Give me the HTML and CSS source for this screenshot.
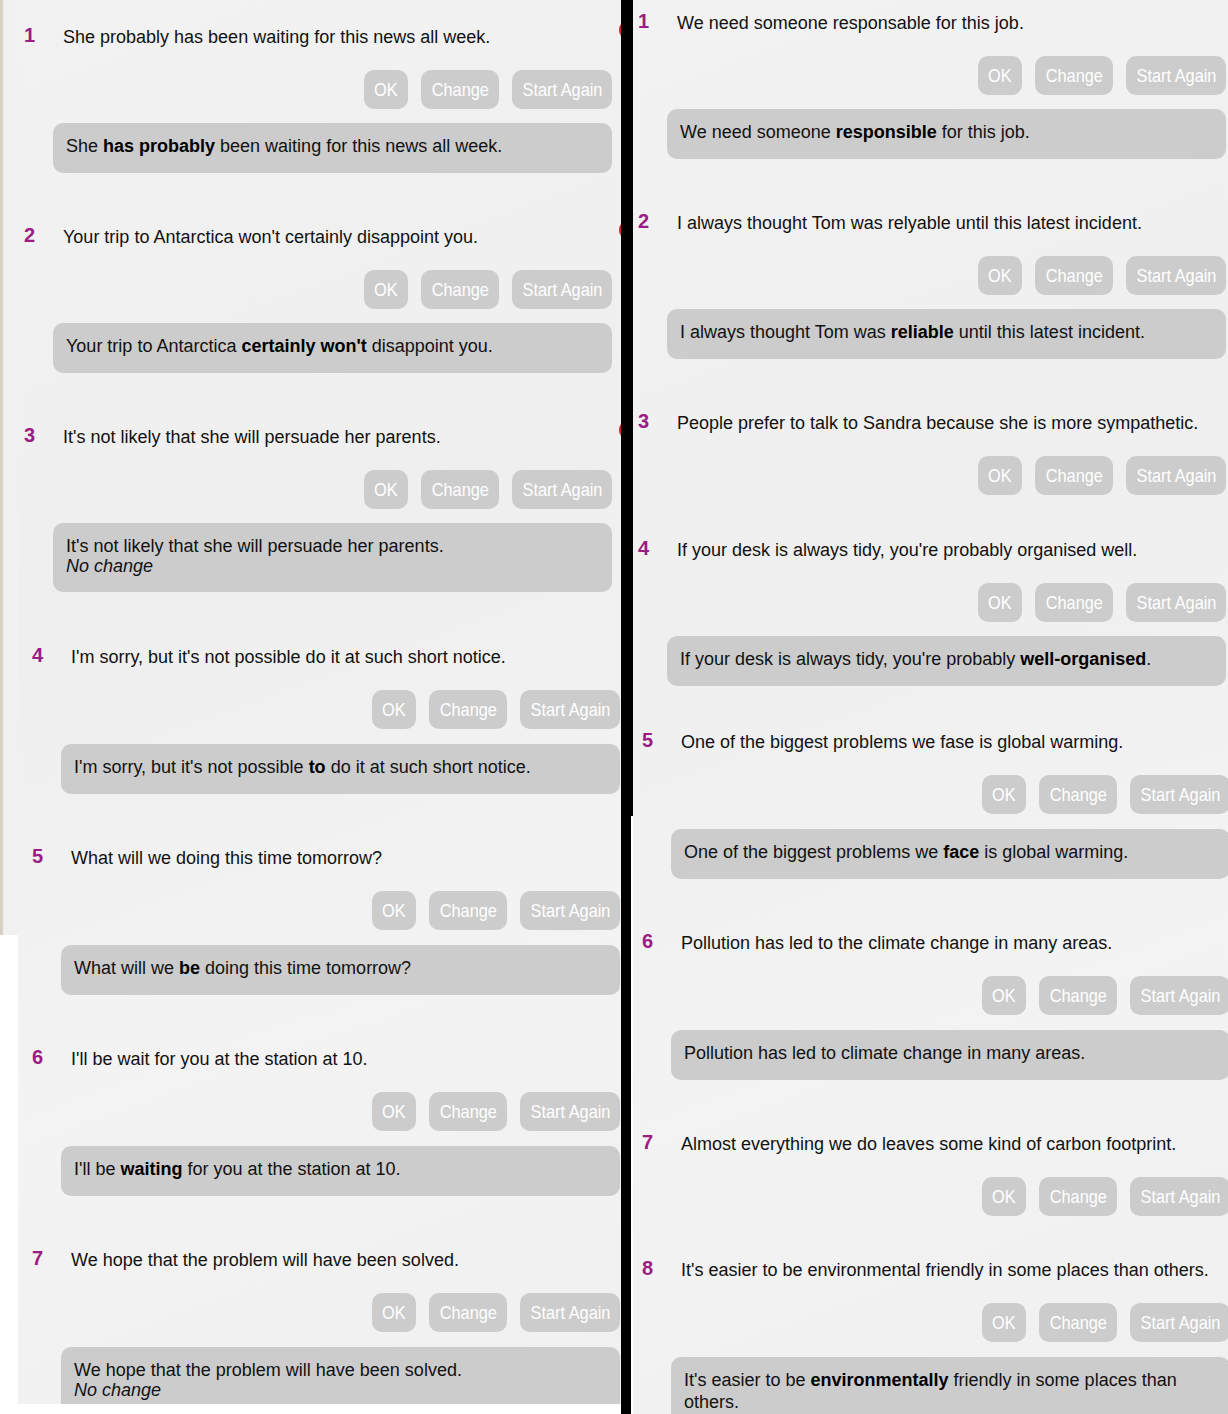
FILE: index.html
```html
<!DOCTYPE html>
<html lang="en">
<head>
<meta charset="utf-8">
<title>Sentence correction</title>
<link rel="stylesheet" href="styles.css">
</head>
<body>
<div class="page">
  <div class="col col--left">
    <div class="edge">
      <div class="edge-top"></div>
      <div class="edge-bottom"></div>
    </div>
    <div class="col-body">
      <div class="panel panel--a">
        <div class="item">
          <div class="q"><span class="num">1</span><span class="q-text">She probably has been waiting for this news all week.</span></div>
          <div class="btns"><button class="btn btn--ok"><span class="btn-label">OK</span></button><button class="btn btn--change"><span class="btn-label">Change</span></button><button class="btn btn--again"><span class="btn-label">Start Again</span></button></div>
          <div class="answer">She <b>has probably</b> been waiting for this news all week.</div>
        </div>
        <div class="item">
          <div class="q"><span class="num">2</span><span class="q-text">Your trip to Antarctica won't certainly disappoint you.</span></div>
          <div class="btns"><button class="btn btn--ok"><span class="btn-label">OK</span></button><button class="btn btn--change"><span class="btn-label">Change</span></button><button class="btn btn--again"><span class="btn-label">Start Again</span></button></div>
          <div class="answer">Your trip to Antarctica <b>certainly won't</b> disappoint you.</div>
        </div>
        <div class="item">
          <div class="q"><span class="num">3</span><span class="q-text">It's not likely that she will persuade her parents.</span></div>
          <div class="btns"><button class="btn btn--ok"><span class="btn-label">OK</span></button><button class="btn btn--change"><span class="btn-label">Change</span></button><button class="btn btn--again"><span class="btn-label">Start Again</span></button></div>
          <div class="answer">It's not likely that she will persuade her parents.<span class="note">No change</span></div>
        </div>
      </div>
      <div class="panel panel--b">
        <div class="item">
          <div class="q"><span class="num">4</span><span class="q-text">I'm sorry, but it's not possible do it at such short notice.</span></div>
          <div class="btns"><button class="btn btn--ok"><span class="btn-label">OK</span></button><button class="btn btn--change"><span class="btn-label">Change</span></button><button class="btn btn--again"><span class="btn-label">Start Again</span></button></div>
          <div class="answer">I'm sorry, but it's not possible <b>to</b> do it at such short notice.</div>
        </div>
        <div class="item">
          <div class="q"><span class="num">5</span><span class="q-text">What will we doing this time tomorrow?</span></div>
          <div class="btns"><button class="btn btn--ok"><span class="btn-label">OK</span></button><button class="btn btn--change"><span class="btn-label">Change</span></button><button class="btn btn--again"><span class="btn-label">Start Again</span></button></div>
          <div class="answer">What will we <b>be</b> doing this time tomorrow?</div>
        </div>
        <div class="item">
          <div class="q"><span class="num">6</span><span class="q-text">I'll be wait for you at the station at 10.</span></div>
          <div class="btns"><button class="btn btn--ok"><span class="btn-label">OK</span></button><button class="btn btn--change"><span class="btn-label">Change</span></button><button class="btn btn--again"><span class="btn-label">Start Again</span></button></div>
          <div class="answer">I'll be <b>waiting</b> for you at the station at 10.</div>
        </div>
        <div class="item">
          <div class="q"><span class="num">7</span><span class="q-text">We hope that the problem will have been solved.</span></div>
          <div class="btns"><button class="btn btn--ok"><span class="btn-label">OK</span></button><button class="btn btn--change"><span class="btn-label">Change</span></button><button class="btn btn--again"><span class="btn-label">Start Again</span></button></div>
          <div class="answer">We hope that the problem will have been solved.<span class="note">No change</span></div>
        </div>
      </div>
    </div>
  </div>

  <div class="divider">
    <div class="divider-top"></div>
    <div class="divider-bottom"></div>
  </div>

  <div class="col col--right">
    <div class="panel panel--c">
      <div class="item">
        <div class="q"><span class="num">1</span><span class="q-text">We need someone responsable for this job.</span></div>
        <div class="btns"><button class="btn btn--ok"><span class="btn-label">OK</span></button><button class="btn btn--change"><span class="btn-label">Change</span></button><button class="btn btn--again"><span class="btn-label">Start Again</span></button></div>
        <div class="answer">We need someone <b>responsible</b> for this job.</div>
      </div>
      <div class="item">
        <div class="q"><span class="num">2</span><span class="q-text">I always thought Tom was relyable until this latest incident.</span></div>
        <div class="btns"><button class="btn btn--ok"><span class="btn-label">OK</span></button><button class="btn btn--change"><span class="btn-label">Change</span></button><button class="btn btn--again"><span class="btn-label">Start Again</span></button></div>
        <div class="answer">I always thought Tom was <b>reliable</b> until this latest incident.</div>
      </div>
      <div class="item item--open">
        <div class="q"><span class="num">3</span><span class="q-text">People prefer to talk to Sandra because she is more sympathetic.</span></div>
        <div class="btns"><button class="btn btn--ok"><span class="btn-label">OK</span></button><button class="btn btn--change"><span class="btn-label">Change</span></button><button class="btn btn--again"><span class="btn-label">Start Again</span></button></div>
      </div>
      <div class="item">
        <div class="q"><span class="num">4</span><span class="q-text">If your desk is always tidy, you're probably organised well.</span></div>
        <div class="btns"><button class="btn btn--ok"><span class="btn-label">OK</span></button><button class="btn btn--change"><span class="btn-label">Change</span></button><button class="btn btn--again"><span class="btn-label">Start Again</span></button></div>
        <div class="answer">If your desk is always tidy, you're probably <b>well-organised</b>.</div>
      </div>
    </div>
    <div class="panel panel--d">
      <div class="item">
        <div class="q"><span class="num">5</span><span class="q-text">One of the biggest problems we fase is global warming.</span></div>
        <div class="btns"><button class="btn btn--ok"><span class="btn-label">OK</span></button><button class="btn btn--change"><span class="btn-label">Change</span></button><button class="btn btn--again"><span class="btn-label">Start Again</span></button></div>
        <div class="answer">One of the biggest problems we <b>face</b> is global warming.</div>
      </div>
      <div class="item">
        <div class="q"><span class="num">6</span><span class="q-text">Pollution has led to the climate change in many areas.</span></div>
        <div class="btns"><button class="btn btn--ok"><span class="btn-label">OK</span></button><button class="btn btn--change"><span class="btn-label">Change</span></button><button class="btn btn--again"><span class="btn-label">Start Again</span></button></div>
        <div class="answer">Pollution has led to climate change in many areas.</div>
      </div>
      <div class="item item--open">
        <div class="q"><span class="num">7</span><span class="q-text">Almost everything we do leaves some kind of carbon footprint.</span></div>
        <div class="btns"><button class="btn btn--ok"><span class="btn-label">OK</span></button><button class="btn btn--change"><span class="btn-label">Change</span></button><button class="btn btn--again"><span class="btn-label">Start Again</span></button></div>
      </div>
      <div class="item">
        <div class="q"><span class="num">8</span><span class="q-text">It's easier to be environmental friendly in some places than others.</span></div>
        <div class="btns"><button class="btn btn--ok"><span class="btn-label">OK</span></button><button class="btn btn--change"><span class="btn-label">Change</span></button><button class="btn btn--again"><span class="btn-label">Start Again</span></button></div>
        <div class="answer">It's easier to be <b>environmentally</b> friendly in some places than others.</div>
      </div>
    </div>
  </div>
</div>
</body>
</html>
```

FILE: styles.css
```css
* { box-sizing: border-box; }

html, body {
  margin: 0;
  padding: 0;
  background: #ffffff;
}

body {
  width: 1228px;
  height: 1414px;
  overflow: hidden;
  font-family: "Liberation Sans", Arial, sans-serif;
  font-size: 18px;
  color: #111111;
}

.page {
  display: flex;
  align-items: flex-start;
  width: 1228px;
  height: 1414px;
}

.col {
  overflow: hidden;
  background: linear-gradient(160deg, #f2f2f2 0%, #efefef 40%, #f3f3f3 70%, #f0f0f0 100%);
}

.col--left {
  width: 621px;
  height: 1404px;
  display: flex;
  flex: none;
}

.col--right {
  width: 595px;
  height: 1414px;
  flex: none;
}

.edge {
  width: 18px;
  flex: none;
  display: flex;
  flex-direction: column;
}

.edge-top {
  height: 935px;
  background: linear-gradient(to right, #d9d3c5 0, #d2ccbd 2px, #e6e2d9 3px, #f1f1f1 4px);
}

.edge-bottom {
  flex: 1;
  background: #ffffff;
}

.col-body {
  flex: 1;
  min-width: 0;
}

.divider {
  width: 12px;
  height: 1414px;
  flex: none;
  display: flex;
  flex-direction: column;
}

.divider-top {
  height: 816px;
  background: #000000;
}

.divider-bottom {
  flex: 1;
  background: linear-gradient(to right, #000 0, #000 10px, #ffffff 10px);
}

/* panels */
.panel--a { padding: 27px 0 0 5px; }
.panel--b { padding: 1px 0 0 13px; }
.panel--c { padding: 13px 0 0 4px; }
.panel--d { padding-left: 8px; }

/* item */
.item {
  position: relative;
  width: 589px;
  margin-bottom: 54px;
}

.panel--c .item:last-child { margin-bottom: 46px; }

.panel--c .item--open,
.panel--d .item--open { margin-bottom: 0; }

.panel--c .item--open .btns { margin-bottom: 45px; }
.panel--d .item--open .btns { margin-bottom: 44px; }

.panel--a .item::after {
  content: "";
  position: absolute;
  left: 596px;
  top: -7px;
  width: 20px;
  height: 20px;
  border-radius: 50%;
  background: #c4272f;
}

.q {
  display: flex;
  align-items: flex-start;
  height: 21px;
  line-height: 21px;
  white-space: nowrap;
}

.num {
  width: 40px;
  flex: none;
  padding-left: 1px;
  font-size: 20px;
  font-weight: bold;
  line-height: 17px;
  color: #9a1c84;
}

.q-text {
  color: #111111;
}

.btns {
  display: flex;
  justify-content: flex-end;
  gap: 13px;
  margin-top: 22px;
}

.btn {
  height: 39px;
  padding: 0;
  border: 0;
  border-radius: 10px;
  background: #cccccc;
  color: #ffffff;
  font-family: "Liberation Sans", Arial, sans-serif;
  font-size: 19px;
  display: inline-flex;
  align-items: center;
  justify-content: center;
}

.btn-label {
  display: inline-block;
  transform: scaleX(0.86);
  white-space: nowrap;
}

.btn--ok { width: 44px; }
.btn--change { width: 78px; }
.btn--again { width: 100px; }

.answer {
  margin: 14px 0 0 30px;
  padding: 12px 13px 16px;
  min-height: 50px;
  line-height: 22px;
  background: #cccccc;
  border-radius: 10px;
  color: #111111;
}

.panel--b .answer,
.panel--d .answer { margin-top: 15px; }

.answer b {
  color: #000000;
}

.note {
  display: block;
  font-style: italic;
  line-height: 19px;
}
```
